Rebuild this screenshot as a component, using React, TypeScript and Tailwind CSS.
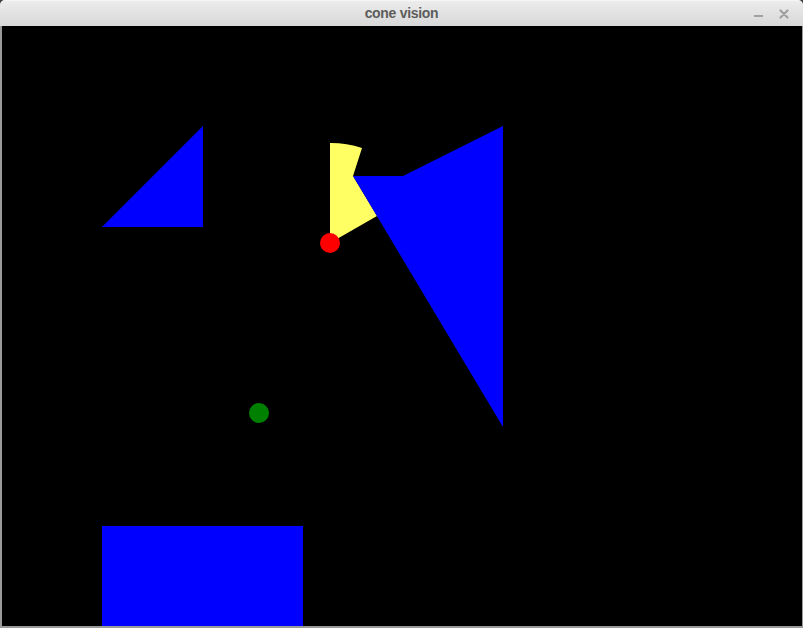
// scene in canvas coordinates (800x600)
const cx = 328
const cy = 217

function Scene() {
  return (
    <svg width={800} height={600} viewBox="0 0 800 600" className="block">
      <rect x={0} y={0} width={800} height={600} fill="#000000" />
      {/* visible part of the vision cone */}
      <path
        d={`M ${cx} ${cy} L ${cx} ${cy - 100} A 100 100 0 0 1 360 122 L 351 150 L 375 190 Z`}
        fill="#ffff64"
      />
      <polygon points="201,100 201,201 100,201" fill="#0000ff" />
      <polygon points="351,150 401,150 501,100 501,401" fill="#0000ff" />
      <rect x={100} y={500} width={201} height={100} fill="#0000ff" />
      <circle cx={cx} cy={cy} r={10} fill="#ff0000" />
      <circle cx={257} cy={387} r={10} fill="#008000" />
    </svg>
  )
}

export default function App() {
  return (
    <div className="w-[803px] h-[628px] bg-[#3a3a3a] overflow-hidden">
      <div className="flex flex-col rounded-t-[5px] overflow-hidden bg-[#9a9a9a]">
        <div className="relative h-[26px] flex items-center justify-center bg-gradient-to-b from-[#ececec] to-[#d8d8d8] border-t border-[#f6f6f6]">
          <span className="text-[14px] font-bold text-[#5c5c5c] tracking-[-0.3px]" style={{ fontFamily: '"Liberation Sans", Arial, sans-serif' }}>
            cone vision
          </span>
          <div className="absolute right-[14px] top-[8px] flex items-center gap-[16px]">
            <svg width={9} height={10} viewBox="0 0 9 10">
              <rect x={0} y={6} width={9} height={2} fill="#a0a0a0" />
            </svg>
            <svg width={10} height={10} viewBox="0 0 10 10">
              <path d="M1.5 1.5 L8.5 8.5 M8.5 1.5 L1.5 8.5" stroke="#a0a0a0" strokeWidth={2.2} strokeLinecap="round" />
            </svg>
          </div>
        </div>
        <div className="flex pl-[2px] pr-[1px] pb-[2px]">
          <Scene />
        </div>
      </div>
    </div>
  )
}
